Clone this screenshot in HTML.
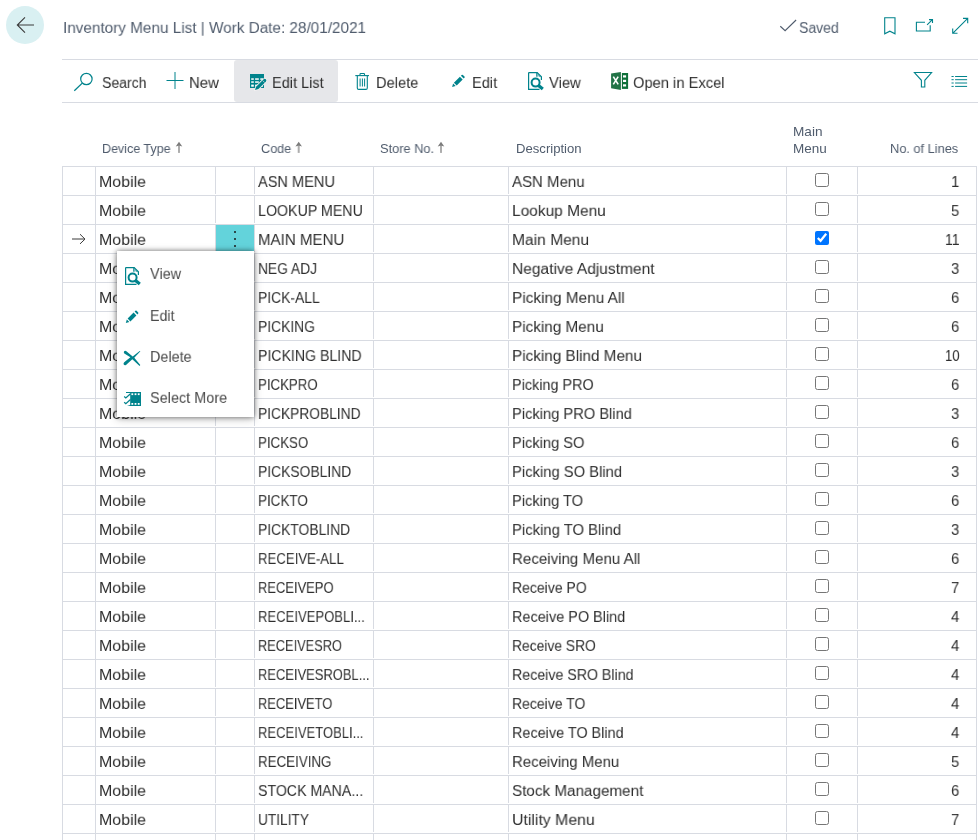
<!DOCTYPE html>
<html><head><meta charset="utf-8"><title>Inventory Menu List</title>
<style>
*{box-sizing:border-box;margin:0;padding:0}
html,body{width:978px;height:840px;overflow:hidden;background:#fff}
body{font-family:"Liberation Sans",sans-serif;color:#212121;position:relative}
.t{position:absolute;line-height:1;white-space:nowrap;transform-origin:0 0;will-change:transform}
.back{position:absolute;left:6px;top:6px;width:38px;height:38px;border-radius:50%;background:#d9f0f2}
.tb{position:absolute;left:62px;top:59px;width:916px;height:44px;border-top:1px solid #d8dbe2;border-bottom:1px solid #d8dbe2}
.editlist{position:absolute;left:234px;top:60px;width:104px;height:42px;background:#e6e7ea;border-radius:3px}
.row{position:absolute;left:62px;width:915px;height:30px;border-top:1px solid #d8dbe2;border-left:1px solid #d8dbe2;border-right:1px solid #d8dbe2}
.row .v{position:absolute;top:0;width:1px;height:27px;background:#d8dbe2}
.v1{left:32px;height:29px !important}.v2{left:152px}.v3{left:191px}.v4{left:310px}.v5{left:445px}.v6{left:723px}.v7{left:794px}
.cb{position:absolute;left:752px;top:6.400px;width:14px;height:14px;margin:0}
.dots{position:absolute;left:153px;top:0;width:38px;height:26px;background:#63d3db}
.dots b{position:absolute;left:18.300px;width:2.200px;height:2.200px;border-radius:50%;background:#1a1a1a}
.dots b:nth-child(1){top:6.300px}.dots b:nth-child(2){top:13.100px}.dots b:nth-child(3){top:19.800px}
.menu{position:absolute;left:117px;top:251px;width:137px;height:166px;background:#fff;box-shadow:0 0 5px rgba(0,0,0,.5),0 2px 9px rgba(0,0,0,.22)}
.ico{position:absolute;left:0;top:0;pointer-events:none}
</style></head><body>
<div class="back"></div>
<span class="t" style="left:62.60px;top:20.54px;font-size:16px;color:#505c6d;transform:scale(0.9561,0.92)">Inventory Menu List | Work Date: 28/01/2021</span><span class="t" style="left:799.30px;top:20.54px;font-size:16px;color:#505c6d;transform:scale(0.8751,0.92)">Saved</span>
<div class="tb"></div>
<div class="editlist"></div>
<span class="t" style="left:101.50px;top:75.54px;font-size:16px;color:#2e2e2e;transform:scale(0.8778,0.92)">Search</span><span class="t" style="left:189.20px;top:75.54px;font-size:16px;color:#2e2e2e;transform:scale(0.9310,0.92)">New</span><span class="t" style="left:271.90px;top:75.54px;font-size:16px;color:#2e2e2e;transform:scale(0.9066,0.92)">Edit List</span><span class="t" style="left:376.20px;top:75.54px;font-size:16px;color:#2e2e2e;transform:scale(0.9168,0.92)">Delete</span><span class="t" style="left:471.90px;top:75.54px;font-size:16px;color:#2e2e2e;transform:scale(0.9104,0.92)">Edit</span><span class="t" style="left:549.00px;top:75.54px;font-size:16px;color:#2e2e2e;transform:scale(0.9247,0.92)">View</span><span class="t" style="left:633.10px;top:75.54px;font-size:16px;color:#2e2e2e;transform:scale(0.9186,0.92)">Open in Excel</span>
<span class="t" style="left:102.10px;top:142.00px;font-size:13px;color:#505c6d;transform:scale(0.9632,1.0)">Device Type</span><span class="t" style="left:261.00px;top:142.00px;font-size:13px;color:#505c6d;transform:scale(0.9750,1.0)">Code</span><span class="t" style="left:379.80px;top:142.00px;font-size:13px;color:#505c6d;transform:scale(0.9852,1.0)">Store No.</span><span class="t" style="left:515.60px;top:142.00px;font-size:13px;color:#505c6d;transform:scale(1.0088,1.0)">Description</span><span class="t" style="left:793.20px;top:125.00px;font-size:13px;color:#505c6d;transform:scale(1.0469,1.0)">Main</span><span class="t" style="left:793.20px;top:142.00px;font-size:13px;color:#505c6d;transform:scale(1.0394,1.0)">Menu</span><span class="t" style="left:890.40px;top:142.00px;font-size:13px;color:#505c6d;transform:scale(0.9831,1.0)">No. of Lines</span>
<div class="row" style="top:166px"><i class="v v1"></i><i class="v v2"></i><i class="v v3"></i><i class="v v4"></i><i class="v v5"></i><i class="v v6"></i><i class="v v7"></i><input type="checkbox" class="cb"></div>
<span class="t" style="left:99.00px;top:174.54px;font-size:16px;color:#2e2e2e;transform:scale(0.9951,0.92)">Mobile</span><span class="t" style="left:257.90px;top:174.54px;font-size:16px;color:#2e2e2e;transform:scale(0.9106,0.92)">ASN MENU</span><span class="t" style="left:511.90px;top:174.54px;font-size:16px;color:#2e2e2e;transform:scale(0.9384,0.92)">ASN Menu</span><span class="t" style="left:951.22px;top:174.54px;font-size:16px;color:#2e2e2e;transform:scale(0.9300,0.92)">1</span>
<div class="row" style="top:195px"><i class="v v1"></i><i class="v v2"></i><i class="v v3"></i><i class="v v4"></i><i class="v v5"></i><i class="v v6"></i><i class="v v7"></i><input type="checkbox" class="cb"></div>
<span class="t" style="left:99.00px;top:203.54px;font-size:16px;color:#2e2e2e;transform:scale(0.9951,0.92)">Mobile</span><span class="t" style="left:257.90px;top:203.54px;font-size:16px;color:#2e2e2e;transform:scale(0.8889,0.92)">LOOKUP MENU</span><span class="t" style="left:511.90px;top:203.54px;font-size:16px;color:#2e2e2e;transform:scale(0.9674,0.92)">Lookup Menu</span><span class="t" style="left:951.22px;top:203.54px;font-size:16px;color:#2e2e2e;transform:scale(0.9300,0.92)">5</span>
<div class="row" style="top:224px"><i class="v v1"></i><i class="v v2"></i><i class="v v3"></i><i class="v v4"></i><i class="v v5"></i><i class="v v6"></i><i class="v v7"></i><span class="dots"><b></b><b></b><b></b></span><input type="checkbox" class="cb" checked></div>
<span class="t" style="left:99.00px;top:232.54px;font-size:16px;color:#2e2e2e;transform:scale(0.9951,0.92)">Mobile</span><span class="t" style="left:257.90px;top:232.54px;font-size:16px;color:#2e2e2e;transform:scale(0.9426,0.92)">MAIN MENU</span><span class="t" style="left:511.90px;top:232.54px;font-size:16px;color:#2e2e2e;transform:scale(0.9741,0.92)">Main Menu</span><span class="t" style="left:945.00px;top:232.54px;font-size:16px;color:#2e2e2e;transform:scale(0.8730,0.92)">11</span>
<div class="row" style="top:253px"><i class="v v1"></i><i class="v v2"></i><i class="v v3"></i><i class="v v4"></i><i class="v v5"></i><i class="v v6"></i><i class="v v7"></i><input type="checkbox" class="cb"></div>
<span class="t" style="left:99.00px;top:261.54px;font-size:16px;color:#2e2e2e;transform:scale(0.9951,0.92)">Mobile</span><span class="t" style="left:257.90px;top:261.54px;font-size:16px;color:#2e2e2e;transform:scale(0.8609,0.92)">NEG ADJ</span><span class="t" style="left:511.90px;top:261.54px;font-size:16px;color:#2e2e2e;transform:scale(0.9713,0.92)">Negative Adjustment</span><span class="t" style="left:951.22px;top:261.54px;font-size:16px;color:#2e2e2e;transform:scale(0.9300,0.92)">3</span>
<div class="row" style="top:282px"><i class="v v1"></i><i class="v v2"></i><i class="v v3"></i><i class="v v4"></i><i class="v v5"></i><i class="v v6"></i><i class="v v7"></i><input type="checkbox" class="cb"></div>
<span class="t" style="left:99.00px;top:290.54px;font-size:16px;color:#2e2e2e;transform:scale(0.9951,0.92)">Mobile</span><span class="t" style="left:257.90px;top:290.54px;font-size:16px;color:#2e2e2e;transform:scale(0.8673,0.92)">PICK-ALL</span><span class="t" style="left:511.90px;top:290.54px;font-size:16px;color:#2e2e2e;transform:scale(0.9605,0.92)">Picking Menu All</span><span class="t" style="left:951.22px;top:290.54px;font-size:16px;color:#2e2e2e;transform:scale(0.9300,0.92)">6</span>
<div class="row" style="top:311px"><i class="v v1"></i><i class="v v2"></i><i class="v v3"></i><i class="v v4"></i><i class="v v5"></i><i class="v v6"></i><i class="v v7"></i><input type="checkbox" class="cb"></div>
<span class="t" style="left:99.00px;top:319.54px;font-size:16px;color:#2e2e2e;transform:scale(0.9951,0.92)">Mobile</span><span class="t" style="left:257.90px;top:319.54px;font-size:16px;color:#2e2e2e;transform:scale(0.8664,0.92)">PICKING</span><span class="t" style="left:511.90px;top:319.54px;font-size:16px;color:#2e2e2e;transform:scale(0.9547,0.92)">Picking Menu</span><span class="t" style="left:951.22px;top:319.54px;font-size:16px;color:#2e2e2e;transform:scale(0.9300,0.92)">6</span>
<div class="row" style="top:340px"><i class="v v1"></i><i class="v v2"></i><i class="v v3"></i><i class="v v4"></i><i class="v v5"></i><i class="v v6"></i><i class="v v7"></i><input type="checkbox" class="cb"></div>
<span class="t" style="left:99.00px;top:348.54px;font-size:16px;color:#2e2e2e;transform:scale(0.9951,0.92)">Mobile</span><span class="t" style="left:257.90px;top:348.54px;font-size:16px;color:#2e2e2e;transform:scale(0.8828,0.92)">PICKING BLIND</span><span class="t" style="left:511.90px;top:348.54px;font-size:16px;color:#2e2e2e;transform:scale(0.9547,0.92)">Picking Blind Menu</span><span class="t" style="left:945.00px;top:348.54px;font-size:16px;color:#2e2e2e;transform:scale(0.8147,0.92)">10</span>
<div class="row" style="top:369px"><i class="v v1"></i><i class="v v2"></i><i class="v v3"></i><i class="v v4"></i><i class="v v5"></i><i class="v v6"></i><i class="v v7"></i><input type="checkbox" class="cb"></div>
<span class="t" style="left:99.00px;top:377.54px;font-size:16px;color:#2e2e2e;transform:scale(0.9951,0.92)">Mobile</span><span class="t" style="left:257.90px;top:377.54px;font-size:16px;color:#2e2e2e;transform:scale(0.8290,0.92)">PICKPRO</span><span class="t" style="left:511.90px;top:377.54px;font-size:16px;color:#2e2e2e;transform:scale(0.9008,0.92)">Picking PRO</span><span class="t" style="left:951.22px;top:377.54px;font-size:16px;color:#2e2e2e;transform:scale(0.9300,0.92)">6</span>
<div class="row" style="top:398px"><i class="v v1"></i><i class="v v2"></i><i class="v v3"></i><i class="v v4"></i><i class="v v5"></i><i class="v v6"></i><i class="v v7"></i><input type="checkbox" class="cb"></div>
<span class="t" style="left:99.00px;top:406.54px;font-size:16px;color:#2e2e2e;transform:scale(0.9951,0.92)">Mobile</span><span class="t" style="left:257.90px;top:406.54px;font-size:16px;color:#2e2e2e;transform:scale(0.8612,0.92)">PICKPROBLIND</span><span class="t" style="left:511.90px;top:406.54px;font-size:16px;color:#2e2e2e;transform:scale(0.9172,0.92)">Picking PRO Blind</span><span class="t" style="left:951.22px;top:406.54px;font-size:16px;color:#2e2e2e;transform:scale(0.9300,0.92)">3</span>
<div class="row" style="top:427px"><i class="v v1"></i><i class="v v2"></i><i class="v v3"></i><i class="v v4"></i><i class="v v5"></i><i class="v v6"></i><i class="v v7"></i><input type="checkbox" class="cb"></div>
<span class="t" style="left:99.00px;top:435.54px;font-size:16px;color:#2e2e2e;transform:scale(0.9951,0.92)">Mobile</span><span class="t" style="left:257.90px;top:435.54px;font-size:16px;color:#2e2e2e;transform:scale(0.8319,0.92)">PICKSO</span><span class="t" style="left:511.90px;top:435.54px;font-size:16px;color:#2e2e2e;transform:scale(0.9148,0.92)">Picking SO</span><span class="t" style="left:951.22px;top:435.54px;font-size:16px;color:#2e2e2e;transform:scale(0.9300,0.92)">6</span>
<div class="row" style="top:456px"><i class="v v1"></i><i class="v v2"></i><i class="v v3"></i><i class="v v4"></i><i class="v v5"></i><i class="v v6"></i><i class="v v7"></i><input type="checkbox" class="cb"></div>
<span class="t" style="left:99.00px;top:464.54px;font-size:16px;color:#2e2e2e;transform:scale(0.9951,0.92)">Mobile</span><span class="t" style="left:257.90px;top:464.54px;font-size:16px;color:#2e2e2e;transform:scale(0.8663,0.92)">PICKSOBLIND</span><span class="t" style="left:511.90px;top:464.54px;font-size:16px;color:#2e2e2e;transform:scale(0.9239,0.92)">Picking SO Blind</span><span class="t" style="left:951.22px;top:464.54px;font-size:16px;color:#2e2e2e;transform:scale(0.9300,0.92)">3</span>
<div class="row" style="top:485px"><i class="v v1"></i><i class="v v2"></i><i class="v v3"></i><i class="v v4"></i><i class="v v5"></i><i class="v v6"></i><i class="v v7"></i><input type="checkbox" class="cb"></div>
<span class="t" style="left:99.00px;top:493.54px;font-size:16px;color:#2e2e2e;transform:scale(0.9951,0.92)">Mobile</span><span class="t" style="left:257.90px;top:493.54px;font-size:16px;color:#2e2e2e;transform:scale(0.8419,0.92)">PICKTO</span><span class="t" style="left:511.90px;top:493.54px;font-size:16px;color:#2e2e2e;transform:scale(0.9147,0.92)">Picking TO</span><span class="t" style="left:951.22px;top:493.54px;font-size:16px;color:#2e2e2e;transform:scale(0.9300,0.92)">6</span>
<div class="row" style="top:514px"><i class="v v1"></i><i class="v v2"></i><i class="v v3"></i><i class="v v4"></i><i class="v v5"></i><i class="v v6"></i><i class="v v7"></i><input type="checkbox" class="cb"></div>
<span class="t" style="left:99.00px;top:522.54px;font-size:16px;color:#2e2e2e;transform:scale(0.9951,0.92)">Mobile</span><span class="t" style="left:257.90px;top:522.54px;font-size:16px;color:#2e2e2e;transform:scale(0.8666,0.92)">PICKTOBLIND</span><span class="t" style="left:511.90px;top:522.54px;font-size:16px;color:#2e2e2e;transform:scale(0.9273,0.92)">Picking TO Blind</span><span class="t" style="left:951.22px;top:522.54px;font-size:16px;color:#2e2e2e;transform:scale(0.9300,0.92)">3</span>
<div class="row" style="top:543px"><i class="v v1"></i><i class="v v2"></i><i class="v v3"></i><i class="v v4"></i><i class="v v5"></i><i class="v v6"></i><i class="v v7"></i><input type="checkbox" class="cb"></div>
<span class="t" style="left:99.00px;top:551.54px;font-size:16px;color:#2e2e2e;transform:scale(0.9951,0.92)">Mobile</span><span class="t" style="left:257.90px;top:551.54px;font-size:16px;color:#2e2e2e;transform:scale(0.8237,0.92)">RECEIVE-ALL</span><span class="t" style="left:511.90px;top:551.54px;font-size:16px;color:#2e2e2e;transform:scale(0.9434,0.92)">Receiving Menu All</span><span class="t" style="left:951.22px;top:551.54px;font-size:16px;color:#2e2e2e;transform:scale(0.9300,0.92)">6</span>
<div class="row" style="top:572px"><i class="v v1"></i><i class="v v2"></i><i class="v v3"></i><i class="v v4"></i><i class="v v5"></i><i class="v v6"></i><i class="v v7"></i><input type="checkbox" class="cb"></div>
<span class="t" style="left:99.00px;top:580.54px;font-size:16px;color:#2e2e2e;transform:scale(0.9951,0.92)">Mobile</span><span class="t" style="left:257.90px;top:580.54px;font-size:16px;color:#2e2e2e;transform:scale(0.8087,0.92)">RECEIVEPO</span><span class="t" style="left:511.90px;top:580.54px;font-size:16px;color:#2e2e2e;transform:scale(0.8739,0.92)">Receive PO</span><span class="t" style="left:951.22px;top:580.54px;font-size:16px;color:#2e2e2e;transform:scale(0.9300,0.92)">7</span>
<div class="row" style="top:601px"><i class="v v1"></i><i class="v v2"></i><i class="v v3"></i><i class="v v4"></i><i class="v v5"></i><i class="v v6"></i><i class="v v7"></i><input type="checkbox" class="cb"></div>
<span class="t" style="left:99.00px;top:609.54px;font-size:16px;color:#2e2e2e;transform:scale(0.9951,0.92)">Mobile</span><span class="t" style="left:257.90px;top:609.54px;font-size:16px;color:#2e2e2e;transform:scale(0.8171,0.92)">RECEIVEPOBLI...</span><span class="t" style="left:511.90px;top:609.54px;font-size:16px;color:#2e2e2e;transform:scale(0.9028,0.92)">Receive PO Blind</span><span class="t" style="left:951.22px;top:609.54px;font-size:16px;color:#2e2e2e;transform:scale(0.9300,0.92)">4</span>
<div class="row" style="top:630px"><i class="v v1"></i><i class="v v2"></i><i class="v v3"></i><i class="v v4"></i><i class="v v5"></i><i class="v v6"></i><i class="v v7"></i><input type="checkbox" class="cb"></div>
<span class="t" style="left:99.00px;top:638.54px;font-size:16px;color:#2e2e2e;transform:scale(0.9951,0.92)">Mobile</span><span class="t" style="left:257.90px;top:638.54px;font-size:16px;color:#2e2e2e;transform:scale(0.7997,0.92)">RECEIVESRO</span><span class="t" style="left:511.90px;top:638.54px;font-size:16px;color:#2e2e2e;transform:scale(0.8646,0.92)">Receive SRO</span><span class="t" style="left:951.22px;top:638.54px;font-size:16px;color:#2e2e2e;transform:scale(0.9300,0.92)">4</span>
<div class="row" style="top:659px"><i class="v v1"></i><i class="v v2"></i><i class="v v3"></i><i class="v v4"></i><i class="v v5"></i><i class="v v6"></i><i class="v v7"></i><input type="checkbox" class="cb"></div>
<span class="t" style="left:99.00px;top:667.54px;font-size:16px;color:#2e2e2e;transform:scale(0.9951,0.92)">Mobile</span><span class="t" style="left:257.90px;top:667.54px;font-size:16px;color:#2e2e2e;transform:scale(0.8083,0.92)">RECEIVESROBL...</span><span class="t" style="left:511.90px;top:667.54px;font-size:16px;color:#2e2e2e;transform:scale(0.8872,0.92)">Receive SRO Blind</span><span class="t" style="left:951.22px;top:667.54px;font-size:16px;color:#2e2e2e;transform:scale(0.9300,0.92)">4</span>
<div class="row" style="top:688px"><i class="v v1"></i><i class="v v2"></i><i class="v v3"></i><i class="v v4"></i><i class="v v5"></i><i class="v v6"></i><i class="v v7"></i><input type="checkbox" class="cb"></div>
<span class="t" style="left:99.00px;top:696.54px;font-size:16px;color:#2e2e2e;transform:scale(0.9951,0.92)">Mobile</span><span class="t" style="left:257.90px;top:696.54px;font-size:16px;color:#2e2e2e;transform:scale(0.8061,0.92)">RECEIVETO</span><span class="t" style="left:511.90px;top:696.54px;font-size:16px;color:#2e2e2e;transform:scale(0.8731,0.92)">Receive TO</span><span class="t" style="left:951.22px;top:696.54px;font-size:16px;color:#2e2e2e;transform:scale(0.9300,0.92)">4</span>
<div class="row" style="top:717px"><i class="v v1"></i><i class="v v2"></i><i class="v v3"></i><i class="v v4"></i><i class="v v5"></i><i class="v v6"></i><i class="v v7"></i><input type="checkbox" class="cb"></div>
<span class="t" style="left:99.00px;top:725.54px;font-size:16px;color:#2e2e2e;transform:scale(0.9951,0.92)">Mobile</span><span class="t" style="left:257.90px;top:725.54px;font-size:16px;color:#2e2e2e;transform:scale(0.8145,0.92)">RECEIVETOBLI...</span><span class="t" style="left:511.90px;top:725.54px;font-size:16px;color:#2e2e2e;transform:scale(0.9009,0.92)">Receive TO Blind</span><span class="t" style="left:951.22px;top:725.54px;font-size:16px;color:#2e2e2e;transform:scale(0.9300,0.92)">4</span>
<div class="row" style="top:746px"><i class="v v1"></i><i class="v v2"></i><i class="v v3"></i><i class="v v4"></i><i class="v v5"></i><i class="v v6"></i><i class="v v7"></i><input type="checkbox" class="cb"></div>
<span class="t" style="left:99.00px;top:754.54px;font-size:16px;color:#2e2e2e;transform:scale(0.9951,0.92)">Mobile</span><span class="t" style="left:257.90px;top:754.54px;font-size:16px;color:#2e2e2e;transform:scale(0.8339,0.92)">RECEIVING</span><span class="t" style="left:511.90px;top:754.54px;font-size:16px;color:#2e2e2e;transform:scale(0.9344,0.92)">Receiving Menu</span><span class="t" style="left:951.22px;top:754.54px;font-size:16px;color:#2e2e2e;transform:scale(0.9300,0.92)">5</span>
<div class="row" style="top:775px"><i class="v v1"></i><i class="v v2"></i><i class="v v3"></i><i class="v v4"></i><i class="v v5"></i><i class="v v6"></i><i class="v v7"></i><input type="checkbox" class="cb"></div>
<span class="t" style="left:99.00px;top:783.54px;font-size:16px;color:#2e2e2e;transform:scale(0.9951,0.92)">Mobile</span><span class="t" style="left:257.90px;top:783.54px;font-size:16px;color:#2e2e2e;transform:scale(0.8844,0.92)">STOCK MANA...</span><span class="t" style="left:511.90px;top:783.54px;font-size:16px;color:#2e2e2e;transform:scale(0.9525,0.92)">Stock Management</span><span class="t" style="left:951.22px;top:783.54px;font-size:16px;color:#2e2e2e;transform:scale(0.9300,0.92)">6</span>
<div class="row" style="top:804px"><i class="v v1"></i><i class="v v2"></i><i class="v v3"></i><i class="v v4"></i><i class="v v5"></i><i class="v v6"></i><i class="v v7"></i><input type="checkbox" class="cb"></div>
<span class="t" style="left:99.00px;top:812.54px;font-size:16px;color:#2e2e2e;transform:scale(0.9951,0.92)">Mobile</span><span class="t" style="left:257.90px;top:812.54px;font-size:16px;color:#2e2e2e;transform:scale(0.8546,0.92)">UTILITY</span><span class="t" style="left:511.90px;top:812.54px;font-size:16px;color:#2e2e2e;transform:scale(0.9895,0.92)">Utility Menu</span><span class="t" style="left:951.22px;top:812.54px;font-size:16px;color:#2e2e2e;transform:scale(0.9300,0.92)">7</span>
<div class="row" style="top:833px"><i class="v v1"></i><i class="v v2"></i><i class="v v3"></i><i class="v v4"></i><i class="v v5"></i><i class="v v6"></i><i class="v v7"></i></div>
<div class="menu">
<span class="t" style="left:33.00px;top:15.54px;font-size:16px;color:#4a4a4a;transform:scale(0.9043,0.92)">View</span><span class="t" style="left:33.00px;top:57.54px;font-size:16px;color:#4a4a4a;transform:scale(0.8886,0.92)">Edit</span><span class="t" style="left:33.00px;top:98.54px;font-size:16px;color:#4a4a4a;transform:scale(0.8995,0.92)">Delete</span><span class="t" style="left:33.00px;top:139.54px;font-size:16px;color:#4a4a4a;transform:scale(0.9032,0.92)">Select More</span>
</div>
<svg class="ico" width="978" height="840" viewBox="0 0 978 840">
<defs>
<g id="pencil"><path d="M0.100 12L1.100 8.500L3.700 11.100Z M1.900 7.700L7.900 1.700L10.700 4.500L4.700 10.500Z M8.900 0.700L9.700 -0.100Q10.300 -0.600 10.900 -0.100L12.500 1.500Q13 2.100 12.500 2.700L11.700 3.500Z" fill="#00838c"/></g>
<g id="viewico"><path d="M0.600 0.600H9.200L13.400 4.800V8M0.600 0.600V17.400H11.500" fill="none" stroke="#00838c" stroke-width="1.200"/><path d="M8.900 0.600V4.700" fill="none" stroke="#00838c" stroke-width="1.300"/><path d="M9.800 1.800L13 5.200L10.600 4.600Z" fill="#00838c" opacity=".75"/><circle cx="7.600" cy="10.600" r="4" fill="#fff" stroke="#00838c" stroke-width="2"/><path d="M10.500 13.500L14.800 17.100" stroke="#00838c" stroke-width="3.200" stroke-linecap="butt"/></g>
</defs>
<!-- back arrow -->
<path d="M34 25H17.500M25 17.300L17.300 25L25 32.700" fill="none" stroke="#3b3b3b" stroke-width="1.100"/>
<!-- saved check -->
<path d="M780.300 26.300L785.100 30.600L796.100 20" fill="none" stroke="#505c6d" stroke-width="1.150"/>
<!-- bookmark -->
<path d="M884.700 17.700H895V33.800L889.850 31.200L884.700 33.800Z" fill="none" stroke="#00838c" stroke-width="1.100"/>
<!-- popout -->
<path d="M925 22.300H916.400V31H930.200V25.300" fill="none" stroke="#00838c" stroke-width="1.100"/>
<path d="M927.100 24.900L932.400 19.700M929 19.600H932.500V23" fill="none" stroke="#00838c" stroke-width="1.100"/>
<!-- expand -->
<path d="M952.700 33.300L967.700 18.400M963 18.400H967.700V23.200M952.700 28.500V33.300H957.500" fill="none" stroke="#00838c" stroke-width="1.100"/>
<!-- search -->
<circle cx="86.400" cy="79" r="5.700" fill="none" stroke="#00838c" stroke-width="1.200"/>
<path d="M82.300 83.100L74.300 90.700" stroke="#00838c" stroke-width="1.300"/>
<!-- plus -->
<path d="M166.500 80.500H183.500M175 72V89" stroke="#00838c" stroke-width="1"/>
<!-- edit list -->
<g>
<rect x="250" y="74" width="14" height="14" fill="#00838c"/>
<g fill="#fff"><rect x="251.200" y="78.300" width="2.600" height="1.500"/><rect x="255.100" y="78.300" width="3.700" height="1.500"/><rect x="260.300" y="78.300" width="2.700" height="1.500"/>
<rect x="251.200" y="81.300" width="2.600" height="1.500"/><rect x="255.100" y="81.300" width="3.700" height="1.500"/><rect x="260.300" y="81.300" width="2.700" height="1.500"/>
<rect x="251.200" y="84.600" width="2.600" height="2.100"/><rect x="255.100" y="84.600" width="3.700" height="2.100"/><rect x="260.300" y="84.600" width="2.700" height="2.100"/></g>
<path d="M255 90.100L256.100 86.700L263.400 79.400Q264.700 78.300 265.900 79.300Q266.900 80.500 265.800 81.800L258.400 89.100Z" fill="#00838c" stroke="#f3f0f1" stroke-width="1.500" paint-order="stroke"/>
<path d="M262.700 80.600L264.600 82.500" stroke="#e6e7ea" stroke-width="0.700"/>
</g>
<!-- trash -->
<g fill="none" stroke="#00838c">
<path d="M355.300 75.600H369" stroke-width="1.100"/>
<path d="M360 75.300V74.200Q360 73.500 360.700 73.500H363.800Q364.500 73.500 364.500 74.200V75.300" stroke-width="1.100"/>
<path d="M357.300 76V88Q357.300 89.400 358.700 89.400H365.900Q367.300 89.400 367.300 88V76" stroke-width="1.100"/>
<path d="M360.100 78.500V86.500M362.400 78.500V86.500M364.600 78.500V86.500" stroke-width="1"/>
</g>
<!-- pencil toolbar -->
<use href="#pencil" x="452" y="75"/>
<!-- view toolbar -->
<use href="#viewico" x="528" y="72"/>
<!-- excel -->
<g>
<path d="M611.100 73.600L620.900 72V90L611.100 88.300Z" fill="#217346"/>
<rect x="621.900" y="73" width="6.200" height="15.900" fill="#0e7039"/>
<g fill="#fff"><rect x="623" y="75.300" width="3.100" height="2.200"/><rect x="623" y="79.800" width="3.100" height="2.200"/><rect x="623" y="84.300" width="3.100" height="2.200"/></g>
<path d="M613.300 76.600L618.200 84.400M618.200 76.600L613.300 84.400" stroke="#fff" stroke-width="1.600"/>
</g>
<!-- filter -->
<path d="M914.400 72.500H931.600L924.800 80.300V87H921.400V80.300Z" fill="none" stroke="#00838c" stroke-width="1.100" stroke-linejoin="miter"/>
<!-- list -->
<path d="M951.500 76.500H953.700M955.100 76.500H967.100M951.500 79.700H953.700M955.100 79.700H967.100M951.500 83H953.700M955.100 83H967.100M951.500 86.400H953.700M955.100 86.400H967.100" stroke="#00838c" stroke-width="1"/>
<!-- sort arrows -->
<defs><g id="sarr"><rect x="-1" y="3" width="2" height="7.900" fill="#adadad"/><path d="M0 -0.300L3.300 4.500L1.500 3.900L0 3.500L-1.500 3.900L-3.300 4.500Z" fill="#7c7c7c"/></g></defs>
<use href="#sarr" x="179" y="142"/><use href="#sarr" x="298.700" y="142"/><use href="#sarr" x="441" y="142"/>
<!-- row arrow -->
<path d="M72 239H84.800M80 234.200L85 239.100L80 243.900" fill="none" stroke="#3b3b3b" stroke-width="1"/>
<!-- menu icons -->
<use href="#viewico" x="125" y="267"/>
<use href="#pencil" x="125.700" y="310.900"/>
<path d="M124 351.600Q125 350.300 126.400 351.300L132.700 356.500L139.700 351L140.400 351.300L134.300 357.700L140.300 364.900L139.600 365.900L132.300 359.300L126 364.900Q124.600 365.700 123.700 364.400Q123.200 363.200 124.200 362.300L130.400 357.300L124.300 353.500Q123.500 352.700 124 351.600Z" fill="#00838c"/>
<g>
<path d="M126 392H141V406H127L130.200 405V393H126Z" fill="#00838c"/>
<g fill="#fff"><rect x="131.400" y="393.300" width="1.800" height="1.800"/><rect x="134.600" y="393.300" width="1.800" height="1.800"/><rect x="137.800" y="393.300" width="1.800" height="1.800"/><rect x="131.400" y="403" width="1.800" height="1.800"/><rect x="134.600" y="403" width="1.800" height="1.800"/><rect x="137.800" y="403" width="1.800" height="1.800"/></g>
<path d="M124.200 396.600L125.800 398L130.500 393.800M124.200 402.300L125.800 403.700L130.500 399.500" fill="none" stroke="#00838c" stroke-width="1.300"/>
</g>
</svg>

</body></html>
